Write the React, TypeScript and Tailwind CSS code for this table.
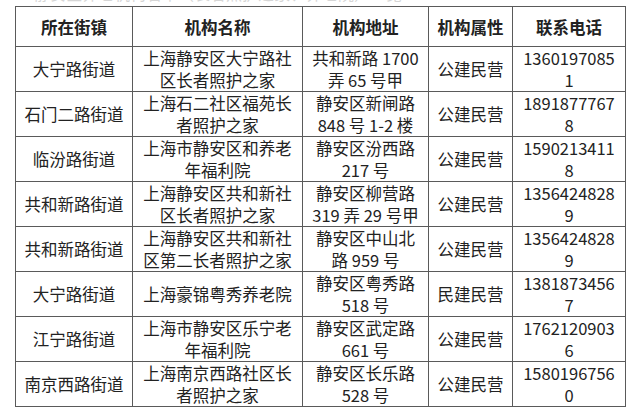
import React from "react";

type Row = { town: string; name: string[]; addr: string[]; type: string; phone: string[] };

const rows: Row[] = [
  { town: "大宁路街道", name: ["上海静安区大宁路社", "区长者照护之家"], addr: ["共和新路 1700", "弄 65 号甲"], type: "公建民营", phone: ["1360197085", "1"] },
  { town: "石门二路街道", name: ["上海石二社区福苑长", "者照护之家"], addr: ["静安区新闸路", "848 号 1-2 楼"], type: "公建民营", phone: ["1891877767", "8"] },
  { town: "临汾路街道", name: ["上海市静安区和养老", "年福利院"], addr: ["静安区汾西路", "217 号"], type: "公建民营", phone: ["1590213411", "8"] },
  { town: "共和新路街道", name: ["上海静安区共和新社", "区长者照护之家"], addr: ["静安区柳营路", "319 弄 29 号甲"], type: "公建民营", phone: ["1356424828", "9"] },
  { town: "共和新路街道", name: ["上海静安区共和新社", "区第二长者照护之家"], addr: ["静安区中山北", "路 959 号"], type: "公建民营", phone: ["1356424828", "9"] },
  { town: "大宁路街道", name: ["上海豪锦粤秀养老院"], addr: ["静安区粤秀路", "518 号"], type: "民建民营", phone: ["1381873456", "7"] },
  { town: "江宁路街道", name: ["上海市静安区乐宁老", "年福利院"], addr: ["静安区武定路", "661 号"], type: "公建民营", phone: ["1762120903", "6"] },
  { town: "南京西路街道", name: ["上海南京西路社区长", "者照护之家"], addr: ["静安区长乐路", "528 号"], type: "公建民营", phone: ["1580196756", "0"] },
];

const Lines = ({ lines }: { lines: string[] }) => (
  <>
    {lines.map((l, i) => (
      <div key={i} className="whitespace-nowrap h-[22px]">{l}</div>
    ))}
  </>
);

export default function App() {
  const cell = "border border-[#5a5a5a] text-center align-middle p-0";
  return (
    <div
      className="w-[640px] h-[411px] bg-white overflow-hidden text-[#222]"
      style={{ fontFamily: '"Noto Sans CJK SC", "Noto Sans", sans-serif' }}
    >
      <div className="h-[6px] overflow-hidden pl-[34px]">
        <div className="-mt-[17px] text-[16px] leading-[20px] text-[#d6d6d6] whitespace-nowrap">
          静安区养老机构名单（长者照护之家、养老院）一览
        </div>
      </div>
      <table className="ml-[15px] table-fixed border-collapse w-[611px] text-[16.5px] leading-[22px]">
        <colgroup>
          <col className="w-[117px]" />
          <col className="w-[170px]" />
          <col className="w-[126px]" />
          <col className="w-[84px]" />
          <col className="w-[113px]" />
        </colgroup>
        <thead>
          <tr className="h-[40px]">
            {["所在街镇", "机构名称", "机构地址", "机构属性", "联系电话"].map((h) => (
              <th key={h} className={`${cell} font-bold`}>{h}</th>
            ))}
          </tr>
        </thead>
        <tbody>
          {rows.map((r, i) => (
            <tr key={i} className="h-[44.75px]">
              <td className={cell}>{r.town}</td>
              <td className={cell}><Lines lines={r.name} /></td>
              <td className={cell}><Lines lines={r.addr} /></td>
              <td className={cell}>{r.type}</td>
              <td className={cell}><Lines lines={r.phone} /></td>
            </tr>
          ))}
        </tbody>
      </table>
    </div>
  );
}
